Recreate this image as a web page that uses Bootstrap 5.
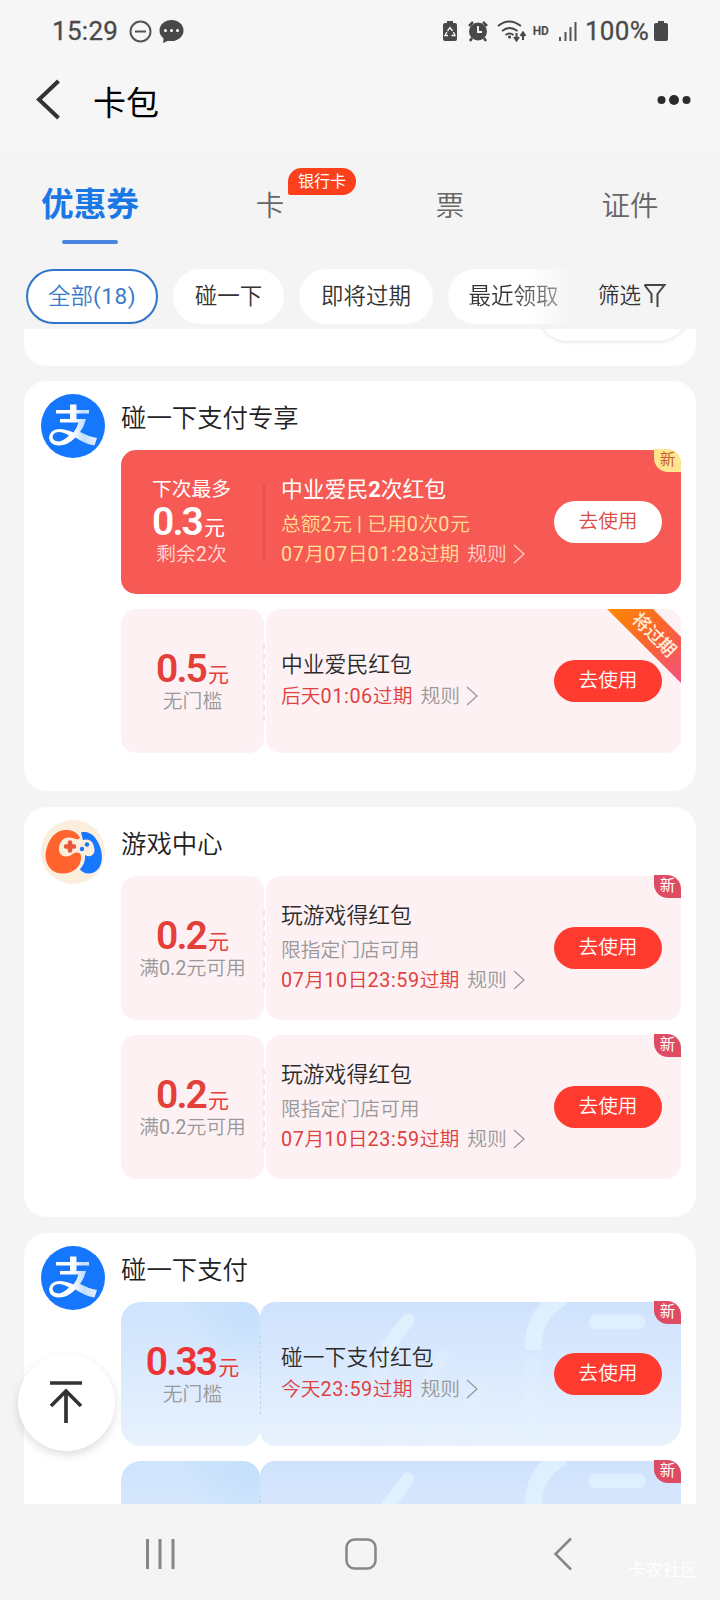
<!DOCTYPE html>
<html lang="zh-CN">
<head>
<meta charset="utf-8">
<meta name="viewport" content="width=device-width, initial-scale=1">
<title>卡包</title>
<link href="https://cdn.jsdelivr.net/npm/bootstrap@5.3.0/dist/css/bootstrap.min.css" rel="stylesheet">
<style>
body{font-family:Roboto,"Noto Sans CJK SC",sans-serif;font-weight:350;background:#f4f4f4;color:#333;width:720px;height:1600px;overflow:hidden}
svg{display:block;flex:none}
.n{font-weight:400}
.topbar{background:#f6f6f6;height:151px}
.status{height:62px;padding:0 51px 0 52px;color:#4a4a4a;font-size:26px;line-height:62px;font-weight:400}
.clock{-webkit-text-stroke:.3px #4a4a4a;letter-spacing:.3px}
.titlebar{height:76px;padding:0 28px 0 35px;color:#000}
.titlebar h1{font-size:33px;font-weight:400;line-height:40px;margin:0 0 0 33px;padding-top:7px}
.tabs{height:108px}
.tab-item{width:180px;font-size:28.5px;line-height:40px;color:#666;padding-top:36px;text-align:center;position:relative}
.tab-item.on{font-size:32.7px;font-weight:700;color:#1a78e6;padding-top:34px}
.tab-item.on i{display:block;width:56px;height:4px;border-radius:2px;background:#4a86dd;margin:15px auto 0}
.hot{position:absolute;left:108px;top:17px;width:68px;height:27px;border-radius:14px 14px 14px 2px;background:#fc401c;color:#fff;font-size:16px;line-height:27px;font-weight:400}
.filters{height:70px;padding:10px 0 0 26px;gap:15px}
.pill{height:55px;border-radius:28px;background:#fff;font-size:22.5px;line-height:54px;text-align:center;flex:none}
.pill.on{border:2px solid #2f74c9;color:#3a7bc8;line-height:50px}
.pill.on .n{letter-spacing:.6px}
.pill.fade-end{border-radius:28px 0 0 28px;background:linear-gradient(90deg,#fff 65%,#f4f4f4);color:transparent}
.pill.fade-end span{background:linear-gradient(90deg,#333 50%,#999);-webkit-background-clip:text;background-clip:text}
.feed{height:1175px;overflow:hidden;padding:0 24px;position:relative}
.shop{background:#fff;border-radius:22px;height:410px;margin-bottom:16px;padding:13px 15px 0 17px}
.shop.prev{height:37px;border-radius:0 0 22px 22px;margin-bottom:15px;padding:0 8px 0 0;overflow:hidden}
.prev-btn{width:150px;height:36px;margin-top:-24px;border-radius:4px 4px 30px 30px;background:#fff;box-shadow:0 1px 4px rgba(0,0,0,.12)}
.logo{width:64px;height:64px}
.shop h2{font-size:25.4px;font-weight:350;line-height:36px;margin:6px 0 14px;color:#222}
.coupon{height:144px;width:560px;margin-bottom:15px;position:relative}
.amount{width:143px;height:144px;border-radius:15px;background:#fdf1f4;text-align:center;padding-top:39px;color:#999;flex:none}
.price{font-size:39px;line-height:42px;font-weight:600;color:#e3403a;height:42px;letter-spacing:-1.9px;white-space:nowrap}
.price small{font-size:21px;font-weight:400;letter-spacing:0;margin-left:2px}
.note{font-size:19.8px;line-height:24px;white-space:nowrap}
.detail{flex:1;height:144px;border-radius:15px;background:#fdf1f4;padding:0 19px 0 15px;margin-left:2px;position:relative}
.detail::before{content:"";position:absolute;left:-3px;top:34px;height:78px;border-left:2px dashed #f0e3e7}
.name{font-size:21.8px;line-height:34px;color:#2b2b2b;margin-top:-2px}
.cond{font-size:19.8px;line-height:30px;margin-top:3px;color:#999}
.until{font-size:19.8px;line-height:30px;color:#e0413f;white-space:nowrap}
.until .n,.cond .n{letter-spacing:.6px}
.rule{color:#999;margin-left:8px}
.rule svg{display:inline-block;vertical-align:-3px;margin-left:6px}
.use{width:108px;height:42px;border-radius:21px;background:#ff3b30;color:#fff;font-size:19.7px;line-height:40px;padding:0;border:0;font-weight:350}
.fresh{position:absolute;right:0;top:-1px;width:27px;height:23px;border-radius:0 14px 0 14px;background:#de4c64;color:#fff;font-size:15.5px;line-height:23px;text-align:center;font-weight:400}
.hero{background:#f75a54;border-radius:15px}
.hero .amount,.hero .detail{background:none}
.hero .amount{color:#ffd9d6;padding:28px 2px 0 0}
.hero .price{color:#fff;height:41px;line-height:41px;margin-left:-6px}
.hero .top-note{color:#fff;font-weight:400}
.hero .detail::before{border-left:2px solid #e9504b}
.hero .name{color:#fff;font-weight:400}
.hero .cond,.hero .until{color:#ffdf94}
.hero .rule{color:#ffd0c8}
.hero .use{background:#fff;color:#dc4a45}
.hero .fresh{background:#fde68f;color:#c95b35}
.tap .amount{width:139px;border-radius:20px 17px 17px 20px;background:radial-gradient(circle at 90% 5%,#c5e0fb,transparent 35%),linear-gradient(#cee3fd,#e8f2fe)}
.tap .price,.tap .note{margin-right:-4px}
.tap .price{color:#ed3338}
.tap .detail{margin-left:0;padding-left:21px;border-radius:15px 15px 22px 15px;background:linear-gradient(#cfe2fd,#e8f2fe);overflow:hidden}
.tap .detail::before{left:0;border-color:#bfd5ec;border-left-width:1px}
.tap .art{position:absolute;left:0;top:0}
.ribbon{position:absolute;right:0;top:0}
.to-top{position:absolute;left:18px;top:1025px;width:97px;height:97px;border-radius:50%;background:#fff;box-shadow:0 4px 10px rgba(0,0,0,.13);padding-right:1px;padding-bottom:2px}
.sysnav{height:96px;position:relative;padding:4px 147px 0 145px}
.home{margin-right:6px}
.stamp{position:absolute;right:22px;top:53px;font-size:17.5px;font-weight:400;color:#fff}
</style>
</head>
<body>
<svg width="0" height="0" class="position-absolute" aria-hidden="true">
<defs>
<linearGradient id="tail" x1="0" x2="1"><stop offset=".5" stop-color="#fff"/><stop offset=".72" stop-color="#c2ddfc"/><stop offset="1" stop-color="#e6f1ff"/></linearGradient>
<linearGradient id="rib" x1="0" y1="0" x2="1" y2="1"><stop offset="0" stop-color="#ff8a00"/><stop offset=".5" stop-color="#f96430"/><stop offset="1" stop-color="#f4507f"/></linearGradient>
<symbol id="pay" viewBox="0 0 64 64"><circle cx="32" cy="32" r="32" fill="#1577fe"/>
<path d="M29 10.500h6.500V16H48v3.500H35.500V25H45q-1.500 7-6 13 8 4.500 17 6L53.500 51.500Q44 50 34.500 43.500 26 52 17 51.500 8.500 50.500 8 43.500 9 35.500 18 35q7 0 14.500 3.500Q36 34 37.500 28.500H19V25h10v-5.500H15V16h14zM28 41.500Q23 38 17.500 38 12 38.500 11.500 43q.5 4 6 4.500 5-.5 10.500-6z" fill="url(#tail)" fill-rule="evenodd"/></symbol>
<symbol id="game" viewBox="0 0 64 64"><circle cx="32" cy="32" r="32" fill="#fbeedd"/>
<path d="M39 18C36 11 28 9 21 10.500 10 13 5 26 4.500 36 5 48 13 54 23 53.500 34 53 41 45 40 36 39.500 32 35 31.500 31 34.500 26 38 18 37 18 29 18 22 22 17.500 28 17.500 33 17.500 36 21 39 18z" fill="#ff642f"/>
<path d="M40 12.500C50 10 57 19 60 30 63 43 58 53 48 53.500 44 53.500 40 51.500 39 49 43 45 44.500 40 44 35 49 38 54 35 53.500 29 52.500 22 49 18 42 20z" fill="#1677ff"/>
<path d="M29 22.500v8M25 26.500h8" stroke="#e9573a" stroke-width="4.500" stroke-linecap="round"/><circle cx="46" cy="24.500" r="2.200" fill="#1677ff"/><circle cx="41" cy="29" r="2.200" fill="#1677ff"/></symbol>
<symbol id="chev" viewBox="0 0 12 20"><path d="M1 1l10 9-10 9" fill="none" stroke="currentColor" stroke-width="1.300"/></symbol>
<symbol id="waves" viewBox="0 0 421 144"><g fill="none" stroke="#e4f4fe" stroke-width="13" stroke-linecap="round" opacity=".7"><path d="M148 18Q108 66 112 144M183 54Q156 96 158 144M220 86Q205 110 206 144" opacity=".5"/><path d="M148 18L128 44" /><path d="M303-5Q272 12 273 48" stroke-width="17" stroke-linecap="butt"/><path d="M273 56V138" stroke-width="17" opacity=".4" stroke-linecap="butt"/><path d="M336 20H378" stroke-width="15"/></g></symbol>
</defs></svg>

<header class="topbar">
<div class="status d-flex align-items-center">
<span class="clock">15:29</span>
<svg style="margin-left:9px" width="58" height="28" viewBox="127 17 58 28"><g fill="none" stroke="#555" stroke-width="2"><circle cx="140.500" cy="31.500" r="10"/><path d="M135 31.500h11"/></g><ellipse cx="171.500" cy="30.500" rx="12" ry="10.500" fill="#484848"/><path d="M164 36l-1 7 9-4z" fill="#484848"/><g fill="#fff"><circle cx="165.500" cy="30.500" r="1.500"/><circle cx="171.500" cy="30.500" r="1.500"/><circle cx="177.500" cy="30.500" r="1.500"/></g></svg>
<div class="ms-auto d-flex align-items-center">
<svg width="88" height="28" viewBox="440 17 88 28"><path d="M446 21h6v2h2q2 0 2 2v14q0 2-2 2h-10q-2 0-2-2V25q0-2 2-2h2z" fill="#484848"/><path d="M446.500 31l2.500-3.500 2.500 3.500m1 1l1.500 3.500h-3.500m-3.500 0H443.900l2-3.500" fill="none" stroke="#fff" stroke-width="1.300"/>
<circle cx="477" cy="31.500" r="9" fill="#484848"/><path d="M468 26l4-4M486 26l-4-4M471 38l-2 3M483 38l2 3" stroke="#484848" stroke-width="2.500"/><path d="M477 26v6h4" fill="none" stroke="#fff" stroke-width="1.800"/>
<g fill="none" stroke="#484848" stroke-width="2"><path d="M497 26q11-9 23 0M501 31q7.500-6 15.500 0M504.500 35q4-3 8 0"/><path d="M515.500 33v7m-2.500-3l2.500 3.500 2.500-3.500M522 40v-7m-2.500 3l2.500-3.500 2.500 3.500"/></g><circle cx="508.500" cy="37" r="1.600" fill="#484848"/></svg>
<span style="font-size:12px;font-weight:700" class="ms-1">HD</span>
<svg class="ms-2" width="20" height="22" viewBox="557 20 20 22"><path d="M560 37v4M565.500 32v9M570.500 27v14M575.500 22v19" stroke="#555" stroke-width="2"/></svg>
<span class="ms-2 clock">100%</span>
<svg class="ms-1" width="16" height="22" viewBox="653 20 16 22"><path d="M658 21h6v2h2q2 0 2 2v14q0 2-2 2h-10q-2 0-2-2V25q0-2 2-2h2z" fill="#484848"/></svg>
</div></div>
<div class="titlebar d-flex align-items-center">
<svg width="25" height="42" viewBox="0 0 25 42"><path d="M23.500 2L4 20.500 23.500 39" fill="none" stroke="#333" stroke-width="4"/></svg>
<h1>卡包</h1>
<svg class="ms-auto" width="36" height="12" viewBox="0 0 36 12" ><g fill="#2b2b2b"><circle cx="5.500" cy="6" r="4"/><circle cx="18" cy="6" r="5"/><circle cx="30.500" cy="6" r="4"/></g></svg>
</div>
</header>

<nav class="tabs d-flex">
<div class="tab-item on">优惠券<i></i></div>
<div class="tab-item">卡<span class="hot">银行卡</span></div>
<div class="tab-item">票</div>
<div class="tab-item">证件</div>
</nav>
<div class="filters d-flex">
<div class="pill on" style="width:132px">全部<span class="n">(18)</span></div>
<div class="pill" style="width:111px">碰一下</div>
<div class="pill" style="width:134px">即将过期</div>
<div class="pill fade-end" style="width:123px"><span class="ps-2">最近领取</span></div>
<div class="d-flex align-items-center" style="font-size:21.500px;height:54px;margin-left:12px">筛选<svg style="margin-left:2px" width="24" height="26" viewBox="0 0 24 26"><path d="M1.500 2h20l-7 9v13M1.500 2l7 9v9" fill="none" stroke="#444" stroke-width="2"/></svg></div>
</div>

<main class="feed">
<section class="shop prev d-flex justify-content-end"><div class="prev-btn"></div></section>

<section class="shop d-flex gap-3">
<svg class="logo"><use href="#pay"/></svg>
<div><h2>碰一下支付专享</h2>
<div class="coupon hero d-flex">
<div class="amount"><div class="note top-note">下次最多</div><div class="price">0.3<small>元</small></div><div class="note">剩余<span class="n">2</span>次</div></div>
<div class="detail d-flex align-items-center justify-content-between"><div><div class="name">中业爱民<b>2</b>次红包</div><div class="cond">总额<span class="n">2</span>元 <span class="n">|</span> 已用<span class="n">0</span>次<span class="n">0</span>元</div><div class="until"><span class="n">07</span>月<span class="n">07</span>日<span class="n">01:28</span>过期<span class="rule">规则<svg width="12" height="20"><use href="#chev"/></svg></span></div></div><button class="btn use">去使用</button></div>
<span class="fresh">新</span></div>
<div class="coupon d-flex">
<div class="amount"><div class="price">0.5<small>元</small></div><div class="note">无门槛</div></div>
<div class="detail d-flex align-items-center justify-content-between"><div><div class="name">中业爱民红包</div><div class="until">后天<span class="n">01:06</span>过期<span class="rule">规则<svg width="12" height="20"><use href="#chev"/></svg></span></div></div><button class="btn use">去使用</button></div>
<svg class="ribbon" width="74" height="74" viewBox="0 0 74 74"><path d="M0 0h46l28 28v46z" fill="url(#rib)"/><text x="47" y="32" transform="rotate(45 47 26)" font-size="18" font-weight="500" text-anchor="middle" fill="#ffefdc">将过期</text></svg></div>
</div></section>

<section class="shop d-flex gap-3">
<svg class="logo"><use href="#game"/></svg>
<div><h2>游戏中心</h2>
<div class="coupon d-flex">
<div class="amount"><div class="price">0.2<small>元</small></div><div class="note">满<span class="n">0.2</span>元可用</div></div>
<div class="detail d-flex align-items-center justify-content-between"><div><div class="name">玩游戏得红包</div><div class="cond">限指定门店可用</div><div class="until"><span class="n">07</span>月<span class="n">10</span>日<span class="n">23:59</span>过期<span class="rule">规则<svg width="12" height="20"><use href="#chev"/></svg></span></div></div><button class="btn use">去使用</button></div>
<span class="fresh">新</span></div>
<div class="coupon d-flex">
<div class="amount"><div class="price">0.2<small>元</small></div><div class="note">满<span class="n">0.2</span>元可用</div></div>
<div class="detail d-flex align-items-center justify-content-between"><div><div class="name">玩游戏得红包</div><div class="cond">限指定门店可用</div><div class="until"><span class="n">07</span>月<span class="n">10</span>日<span class="n">23:59</span>过期<span class="rule">规则<svg width="12" height="20"><use href="#chev"/></svg></span></div></div><button class="btn use">去使用</button></div>
<span class="fresh">新</span></div>
</div></section>

<section class="shop d-flex gap-3">
<svg class="logo"><use href="#pay"/></svg>
<div><h2>碰一下支付</h2>
<div class="coupon tap d-flex">
<div class="amount"><div class="price">0.33<small>元</small></div><div class="note">无门槛</div></div>
<div class="detail d-flex align-items-center justify-content-between"><svg class="art" width="421" height="144"><use href="#waves"/></svg><div class="position-relative"><div class="name">碰一下支付红包</div><div class="until">今天<span class="n">23:59</span>过期<span class="rule">规则<svg width="12" height="20"><use href="#chev"/></svg></span></div></div><button class="btn use position-relative">去使用</button></div>
<span class="fresh">新</span></div>
<div class="coupon tap d-flex">
<div class="amount"></div>
<div class="detail"><svg class="art" width="421" height="144"><use href="#waves"/></svg></div>
<span class="fresh">新</span></div>
</div></section>

<div class="to-top d-flex align-items-center justify-content-center"><svg width="36" height="46" viewBox="0 0 36 46"><path d="M2 4h32M18 44V12M3 27L18 12l15 15" fill="none" stroke="#333" stroke-width="3.700"/></svg></div>
</main>

<footer class="sysnav d-flex justify-content-between align-items-center">
<svg width="30" height="32" viewBox="0 0 30 32"><path d="M2.500 1v30M15 1v30M28 1v30" stroke="#868686" stroke-width="3"/></svg>
<svg class="home" width="32" height="32" viewBox="0 0 32 32"><rect x="1.500" y="1.500" width="29" height="29" rx="8" fill="none" stroke="#868686" stroke-width="2.500"/></svg>
<svg width="20" height="34" viewBox="0 0 20 34"><path d="M18 1.500L2.500 17 18 32.500" fill="none" stroke="#868686" stroke-width="2.500"/></svg>
<span class="stamp">卡农社区</span>
</footer>
<script src="https://cdn.jsdelivr.net/npm/bootstrap@5.3.0/dist/js/bootstrap.bundle.min.js"></script>
</body>
</html>
